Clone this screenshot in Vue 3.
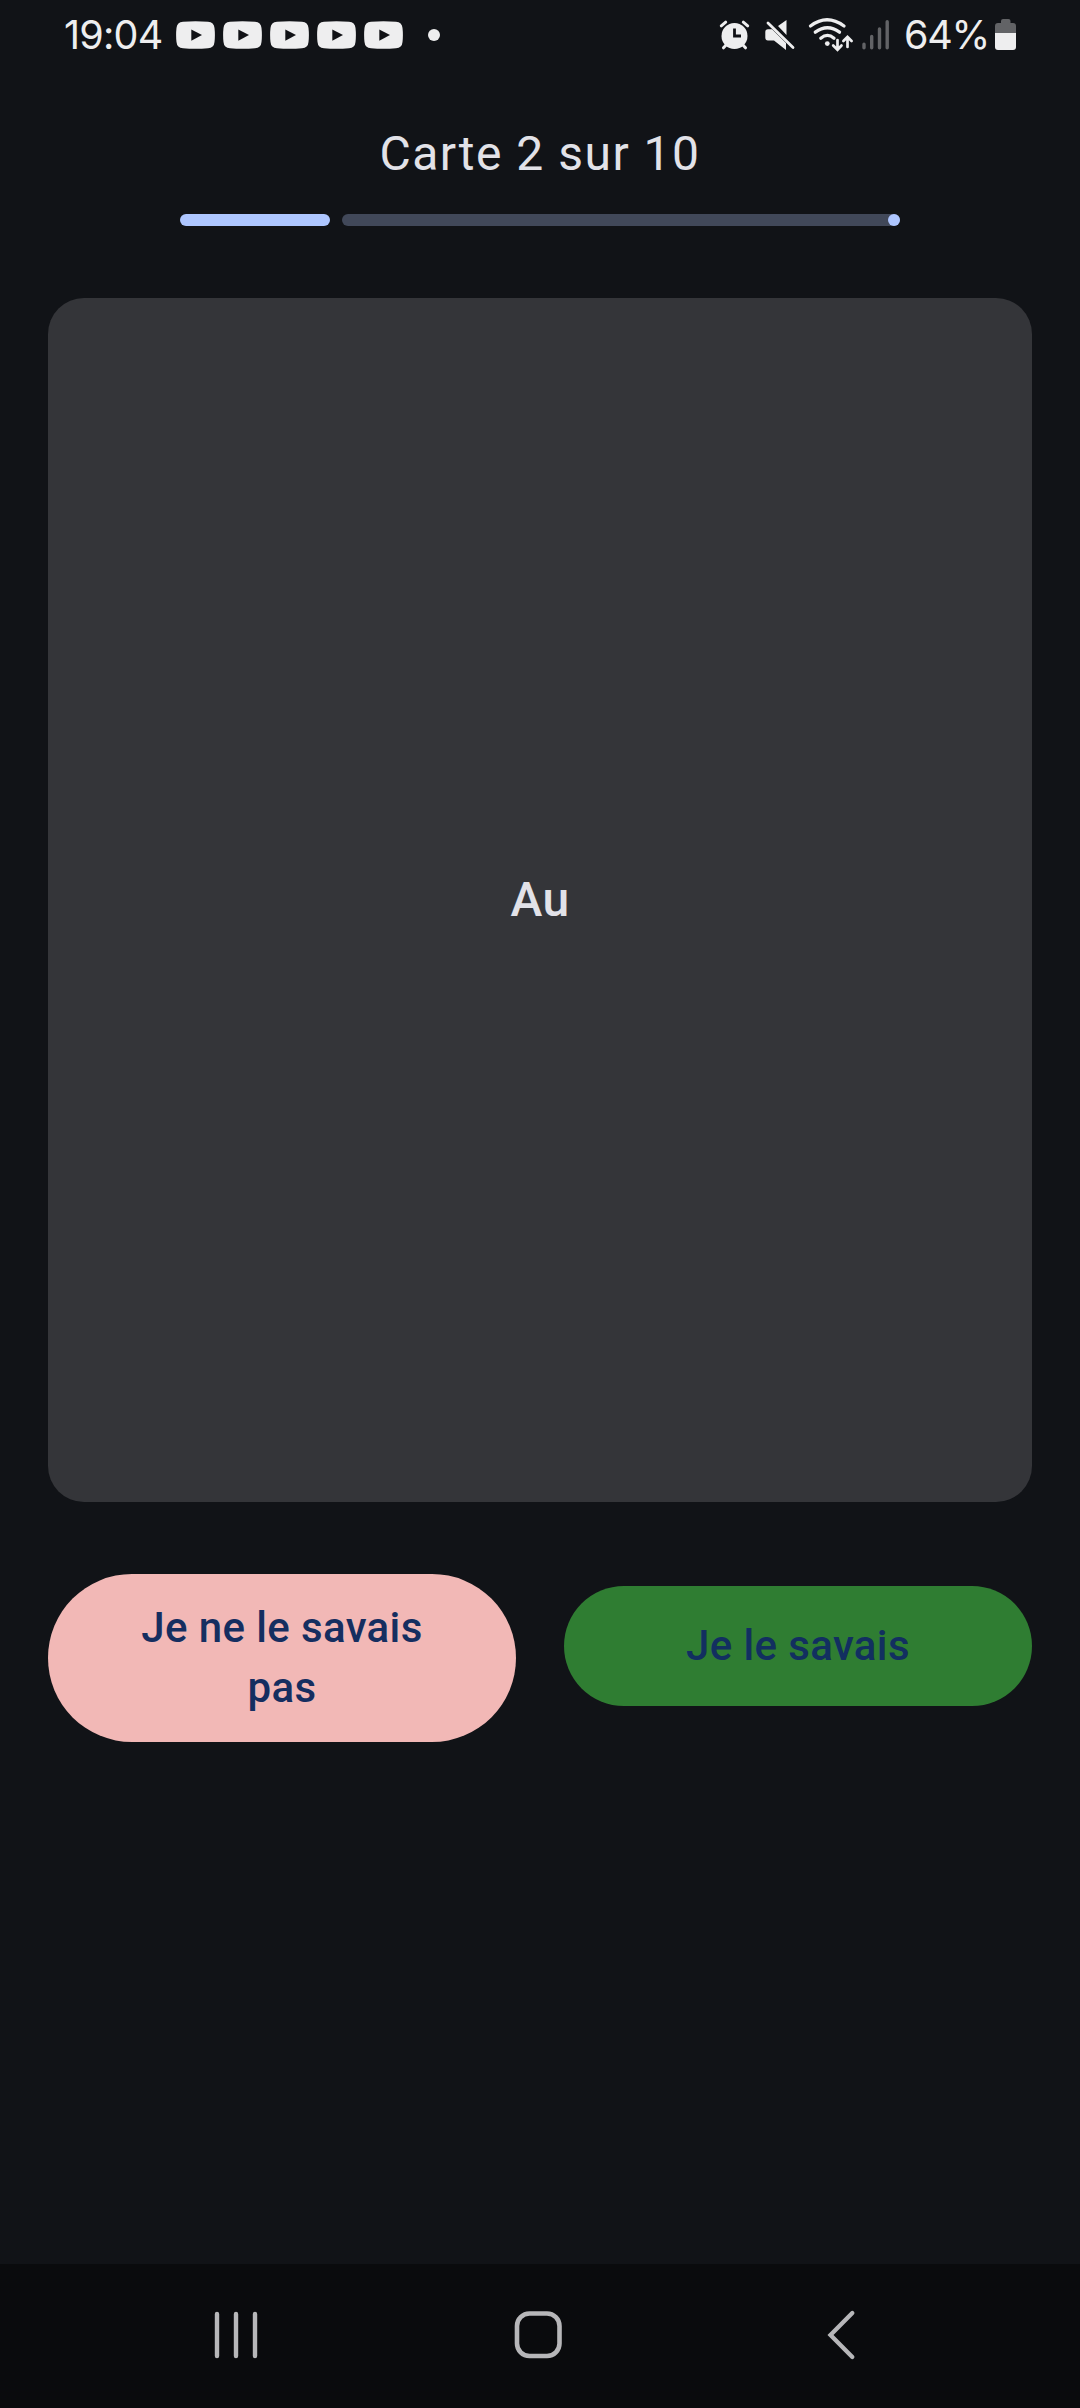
<script setup>
const current = 2
const total = 10
const term = 'Au'
const notifications = 5
</script>

<template>
  <div class="screen">
    <header class="status">
      <span class="clock">19:04</span>
      <div class="notes">
        <svg v-for="n in notifications" :key="n" width="39" height="28" viewBox="0 0 39 28">
          <path d="M7 .7Q19.500-.3 32 .7Q38 1 38.500 7Q39.300 14 38.500 21Q38 27 32 27.300Q19.500 28.300 7 27.300Q1 27 .5 21Q-.3 14 .5 7Q1 1 7 .7Z" fill="#eeeeef" />
          <path d="M15.300 8.400L26 14L15.300 19.800Z" fill="#111216" />
        </svg>
      </div>
      <i class="more"></i>
      <div class="system">
        <svg width="44" height="70" viewBox="716 0 44 70">
          <g stroke="#eeeeef" stroke-width="3" stroke-linecap="round" fill="none">
            <path d="M722.300 25.800L726.700 22.200M748.700 25.800L744.300 22.200M728 44L724.500 47.800M743 44L746.500 47.800" />
          </g>
          <circle cx="735.500" cy="36" r="13" fill="#eeeeef" />
          <path d="M735.500 28.500V36H742" stroke="#111216" stroke-width="2.800" fill="none" />
        </svg>
        <svg width="44" height="70" viewBox="760 0 44 70">
          <path d="M769 29.200H773L787 43V50L775 40.500H769Q766.300 40.500 766.300 37.500V32Q766.300 29.200 769 29.200ZM779 26L787.500 20V35Z" fill="#eeeeef" />
          <path d="M769 23L794 47.500" stroke="#eeeeef" stroke-width="2.800" stroke-linecap="round" />
        </svg>
        <svg width="52" height="70" viewBox="804 0 52 70">
          <g stroke="#eeeeef" stroke-width="3.300" stroke-linecap="round" fill="none">
            <path d="M811.500 26Q828 13.500 845 26M816.300 32.200Q828.500 23.400 840.500 32.200M821.800 38.200Q828.500 32.600 835 38.200" />
            <path d="M838.500 40V49.500M834.200 45.500L838.500 49.800L842.500 45.500M848.500 47V37.500M844.400 41L848.500 37L852.600 41" stroke-width="2.700" />
          </g>
          <circle cx="828.300" cy="43.600" r="2.400" fill="#eeeeef" />
        </svg>
        <svg width="44" height="70" viewBox="856 0 44 70">
          <path d="M865 44.300V47.700M872.700 36.500V47.700M880.500 29V47.700M888.200 21.800V47.700" stroke="#626366" stroke-width="3.400" stroke-linecap="round" />
        </svg>
        <span class="percent">64%</span>
        <svg width="26" height="70" viewBox="994 0 26 70">
          <path d="M1002 23V21Q1002 19 1004 19H1009.500Q1011.500 19 1011.500 21V23H1014Q1017 23 1017 26V33H996V26Q996 23 999 23Z" fill="#626366" />
          <path d="M996 33H1017V47Q1017 50 1014 50H999Q996 50 996 47Z" fill="#eeeeef" />
        </svg>
      </div>
    </header>

    <main class="content">
      <h1 class="title">Carte {{ current }} sur {{ total }}</h1>
      <div class="progress">
        <div class="done"></div>
        <div class="rest"><i class="stop"></i></div>
      </div>
      <section class="card">{{ term }}</section>
      <div class="actions">
        <button class="btn unknown">Je ne le savais pas</button>
        <button class="btn known">Je le savais</button>
      </div>
    </main>

    <nav class="nav">
      <svg width="46" height="54" viewBox="213 2308 46 54">
        <path d="M217 2314V2356M236 2314V2356M255 2314V2356" stroke="#b7b7b9" stroke-width="4.400" stroke-linecap="round" />
      </svg>
      <svg class="home" width="54" height="54" viewBox="511 2308 54 54">
        <rect x="517" y="2313.500" width="42.500" height="42.500" rx="12.500" fill="none" stroke="#b7b7b9" stroke-width="4.600" />
      </svg>
      <svg width="46" height="54" viewBox="821 2308 46 54">
        <path d="M852.300 2313L830.500 2335L852.300 2357" fill="none" stroke="#b7b7b9" stroke-width="4.300" stroke-linecap="round" />
      </svg>
    </nav>
  </div>
</template>

<style>
body { margin: 0; background: #111216; }
</style>

<style scoped>
.screen {
  width: 1080px;
  height: 2408px;
  display: flex;
  flex-direction: column;
  background: #111317;
  color: #e2e2e8;
  font-family: Roboto, "Liberation Sans", sans-serif;
  overflow: hidden;
}
svg { display: block; flex: none; }
.status {
  height: 70px;
  display: flex;
  align-items: center;
  padding: 0 61px 0 64px;
  color: #eeeeef;
  font-family: Inter, Roboto, sans-serif;
  font-size: 39.500px;
  line-height: 70px;
}
.clock { width: 112px; letter-spacing: -.8px; white-space: nowrap; }
.notes { display: flex; gap: 8px; }
.more { width: 12px; height: 12px; border-radius: 50%; background: #eeeeef; margin-left: 25px; }
.system { display: flex; align-items: center; margin-left: auto; }
.percent { width: 94px; padding-left: 5px; box-sizing: border-box; letter-spacing: -1.200px; white-space: nowrap; }
.content { flex: 1; display: flex; flex-direction: column; padding: 0 48px; }
.title {
  margin: 48px 0 0;
  height: 72px;
  line-height: 72px;
  text-align: center;
  font-size: 48px;
  font-weight: 400;
  letter-spacing: 1.5px;
}
.progress { display: flex; gap: 12px; width: 720px; height: 12px; margin: 24px auto 0; }
.done { width: 150px; border-radius: 6px; background: #aec6ff; }
.rest { flex: 1; display: flex; justify-content: flex-end; border-radius: 6px; background: #414859; }
.stop { width: 12px; height: 12px; border-radius: 50%; background: #aec6ff; }
.card {
  height: 1204px;
  margin-top: 72px;
  border-radius: 36px;
  background: #343539;
  display: flex;
  align-items: center;
  justify-content: center;
  font-size: 48px;
  font-weight: 500;
  line-height: 72px;
  letter-spacing: .45px;
}
.actions { display: flex; align-items: flex-start; gap: 48px; margin-top: 72px; }
.btn {
  flex: 1 1 0;
  min-width: 0;
  border: 0;
  padding: 24px 72px;
  border-radius: 84px;
  color: #152e60;
  font: 500 42px/60px Roboto, sans-serif;
  letter-spacing: .38px;
}
.unknown { min-height: 168px; background: #f2b8b6; }
.known { height: 120px; margin-top: 12px; background: #2f7d32; color: #122f60; }
.nav {
  height: 144px;
  box-sizing: border-box;
  display: flex;
  align-items: center;
  justify-content: space-between;
  padding: 0 213px 2px;
  background: #0a0b0d;
}
.home { margin-right: 4px; }
</style>
